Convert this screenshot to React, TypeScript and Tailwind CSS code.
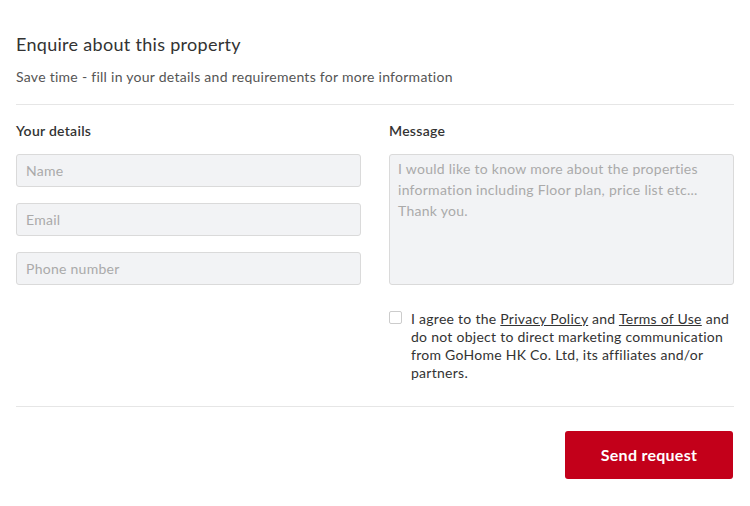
import React from "react";

export default function App() {
  return (
    <div className="w-[750px] h-[506px] bg-white px-4 pt-[32px] text-[#333] tracking-[0.27px]" style={{ fontFamily: "Lato, 'Open Sans', sans-serif" }}>
      <h1 className="text-[18px] leading-[24px] tracking-[0.3px] text-[#333]">Enquire about this property</h1>
      <p className="mt-[12px] text-[14px] leading-[18px] text-[#555]">
        Save time - fill in your details and requirements for more information
      </p>
      <div className="mt-[18px] border-t border-[#e6e6e6]" />
      <div className="mt-[17px] grid grid-cols-2 gap-[28px]">
        <div>
          <div className="text-[14px] leading-[18px] font-semibold text-[#333]">Your details</div>
          <div className="mt-[14px] flex flex-col gap-[16px]">
            {["Name", "Email", "Phone number"].map((p) => (
              <input
                key={p}
                placeholder={p}
                className="h-[33px] w-full rounded-[3px] border border-[#dadada] bg-[#f2f3f5] px-[9px] text-[14px] tracking-[0.27px] placeholder:text-[#aaa] outline-none"
              />
            ))}
          </div>
        </div>
        <div>
          <div className="text-[14px] leading-[18px] font-semibold text-[#333]">Message</div>
          <textarea
            placeholder={"I would like to know more about the properties information including Floor plan, price list etc... Thank you."}
            className="mt-[14px] block h-[131px] w-full resize-none rounded-[3px] border border-[#dadada] bg-[#f2f3f5] px-[8px] py-[3px] text-[14px] leading-[21px] tracking-[0.27px] placeholder:text-[#aaa] outline-none"
          />
          <label className="mt-[25px] flex gap-[9px] text-[14px] leading-[18px] text-[#333]">
            <span className="mt-[1px] h-[13px] w-[13px] shrink-0 rounded-[2px] border border-[#ccc] bg-white" />
            <span>
              I agree to the <span className="underline">Privacy Policy</span> and{" "}
              <span className="underline">Terms of Use</span> and do not object to direct marketing communication from GoHome HK Co. Ltd, its affiliates and/or partners.
            </span>
          </label>
        </div>
      </div>
      <div className="mt-[24px] border-t border-[#e6e6e6]" />
      <div className="mt-[24px] flex justify-end pr-px">
        <button className="h-[48px] w-[168px] rounded-[3px] bg-[#c3001a] text-[16px] font-bold text-white">
          Send request
        </button>
      </div>
    </div>
  );
}
